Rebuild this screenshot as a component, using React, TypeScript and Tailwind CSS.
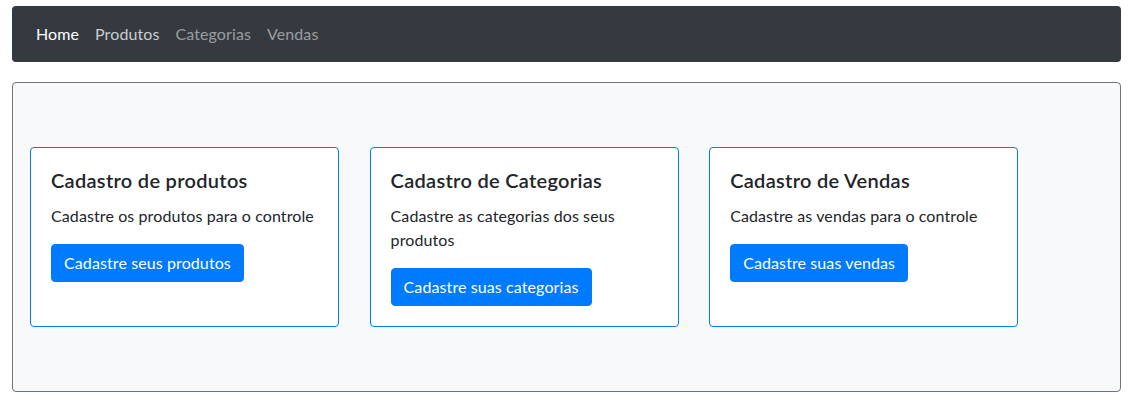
import React from 'react';

const cards = [
  {
    title: 'Cadastro de produtos',
    text: 'Cadastre os produtos para o controle',
    button: 'Cadastre seus produtos',
  },
  {
    title: 'Cadastro de Categorias',
    text: 'Cadastre as categorias dos seus produtos',
    button: 'Cadastre suas categorias',
  },
  {
    title: 'Cadastro de Vendas',
    text: 'Cadastre as vendas para o controle',
    button: 'Cadastre suas vendas',
  },
];

export default function App() {
  return (
    <div className="min-h-screen bg-white px-3 pt-[6px] font-['Lato',_'Noto_Sans',_sans-serif] text-[#212529]">
      <nav className="flex h-[56px] items-center rounded bg-[#343a40] px-4">
        <a className="px-2 text-base leading-6 tracking-[0.1px] text-white">Home</a>
        <a className="px-2 text-base leading-6 tracking-[0.1px] text-white/75">Produtos</a>
        <a className="px-2 text-base leading-6 tracking-[0.1px] text-white/50">Categorias</a>
        <a className="px-2 text-base leading-6 tracking-[0.1px] text-white/50">Vendas</a>
      </nav>

      <main className="mt-[20px] flex h-[310px] items-center gap-[30.4px] rounded border border-[#6c757d] bg-[#f8f9fa] px-[17px]">
        {cards.map((c) => (
          <div
            key={c.title}
            className="flex h-[180px] w-[309.2px] flex-col items-start rounded border border-[#007bff] bg-white p-5"
          >
            <h5 className="mb-3 text-xl font-semibold leading-6 tracking-[0.3px]">{c.title}</h5>
            <p className="mb-4 text-base leading-6 tracking-[0.1px]">{c.text}</p>
            <button className="rounded border border-[#007bff] bg-[#007bff] px-3 py-[6px] text-base leading-6 tracking-[0.1px] text-white">
              {c.button}
            </button>
          </div>
        ))}
      </main>
    </div>
  );
}
